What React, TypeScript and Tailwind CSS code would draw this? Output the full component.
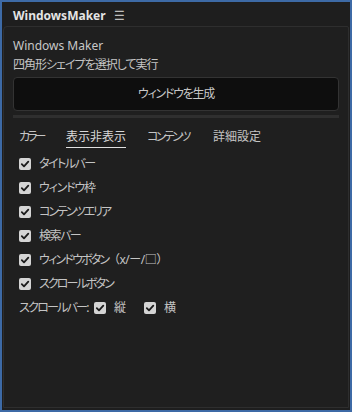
import React from "react";

const font = { fontFamily: '"Noto Sans", "Noto Sans CJK JP", sans-serif' };

function Check() {
  return (
    <span className="flex h-[12px] w-[12px] items-center justify-center rounded-[2px] bg-[#d4d4d4]">
      <svg width="10" height="10" viewBox="0 0 10 10">
        <path d="M1.8 5.2 L4 7.4 L8.3 2.6" fill="none" stroke="#1a1a1a" strokeWidth="1.8" strokeLinecap="round" strokeLinejoin="round" />
      </svg>
    </span>
  );
}

function Row({ children }: { children: React.ReactNode }) {
  return (
    <div className="flex h-[24px] items-center gap-[8px]">
      <Check />
      <span className="flex whitespace-nowrap">{children}</span>
    </div>
  );
}

export default function App() {
  const items: [string, string][] = [
    ["タイトルバー", "tracking-[-1.5px]"],
    ["ウィンドウ枠", "tracking-[-1.2px]"],
    ["コンテンツエリア", "tracking-[-2px]"],
    ["検索バー", "tracking-[-1.5px]"],
  ];
  return (
    <div
      className="flex h-[412px] w-[352px] flex-col border-[2px] border-[#3d6aa6] bg-[#1e1e1e] text-[12px] text-[#c4c4c4] [font-feature-settings:'palt']"
      style={font}
    >
      <div className="flex h-[24px] shrink-0 items-center gap-[8px] px-[11px] pt-[3px]">
        <span className="text-[12px] font-bold text-[#e4e4e4]">WindowsMaker</span>
        <span className="text-[12px] text-[#bdbdbd]">☰</span>
      </div>
      <div className="mx-[1px] mb-[2px] flex flex-1 flex-col rounded-tl-[4px] rounded-tr-[2px] border border-[#2e2e2e] bg-[#1f1f1f] px-[9px] pt-[10px]">
        <div className="leading-[18px] text-[#c8c8c8]">Windows Maker</div>
        <div className="mt-[1px] leading-[18px] tracking-[-1px]">四角形シェイプを選択して実行</div>
        <button className="mt-[3px] flex h-[34px] w-full items-center justify-center rounded-[4px] border border-[#333333] bg-[#0e0e0e] text-[12px] tracking-[-1.25px] text-[#c8c8c8]">
          ウィンドウを生成
        </button>
        <div className="mt-[4px] h-[3px] w-full bg-[#2f2f2f]" />
        <div className="mt-[10px] flex h-[20px] items-start px-[6px] leading-[18px]">
          <span className="w-[25px] whitespace-nowrap tracking-[-3px]">カラー</span>
          <span className="ml-[22px] w-[60px] whitespace-nowrap border-b border-[#e0e0e0] pb-[1px] text-[#d8d8d8]">表示非表示</span>
          <span className="ml-[21px] w-[43px] whitespace-nowrap tracking-[-2.6px]">コンテンツ</span>
          <span className="ml-[23px] whitespace-nowrap">詳細設定</span>
        </div>
        <div className="mt-[4px] flex flex-col px-[6px]">
          {items.map(([t, tr]) => (
            <Row key={t}>
              <span className={tr}>{t}</span>
            </Row>
          ))}
          <Row>
            <span className="w-[69px] tracking-[-1.8px]">ウィンドウボタン</span>
            <span className="tracking-[-0.5px] [font-feature-settings:normal]">（x/ー/□）</span>
          </Row>
          <Row>
            <span className="tracking-[-1.9px]">スクロールボタン</span>
          </Row>
          <div className="flex h-[24px] items-center">
            <span className="w-[70px] whitespace-nowrap tracking-[-1.75px]">スクロールバー:</span>
            <span className="ml-[5px]"><Check /></span>
            <span className="ml-[8px]">縦</span>
            <span className="ml-[18px]"><Check /></span>
            <span className="ml-[8px]">横</span>
          </div>
        </div>
      </div>
    </div>
  );
}
